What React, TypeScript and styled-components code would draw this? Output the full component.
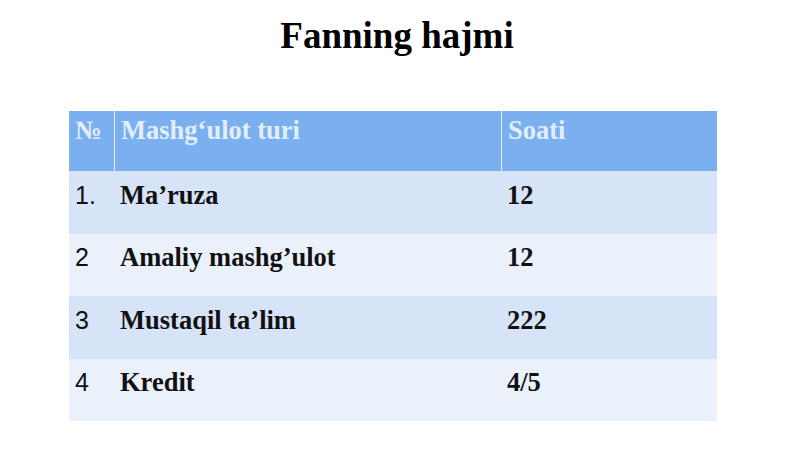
import React from 'react';
import styled, { createGlobalStyle } from 'styled-components';

const GlobalStyle = createGlobalStyle`
  html, body {
    margin: 0;
    padding: 0;
    background: #ffffff;
  }
`;

const Slide = styled.div`
  width: 800px;
  height: 449px;
  background: #ffffff;
  display: flex;
  flex-direction: column;
  align-items: center;
`;

const Title = styled.h1`
  margin: 14px 0 0 0;
  font-family: 'Liberation Serif', 'Times New Roman', serif;
  font-weight: bold;
  font-size: 37px;
  line-height: 44px;
  color: #000000;
  transform: translateX(-3px);
`;

const Table = styled.div`
  align-self: flex-start;
  margin-top: 53px;
  margin-left: 69px;
  width: 648px;
  display: grid;
  grid-template-columns: 45px 387px 216px;
`;

const Cell = styled.div<{ $bg: string; $divider?: boolean; $header?: boolean; $sans?: boolean }>`
  height: ${({ $header }) => ($header ? '60px' : '62.5px')};
  box-sizing: border-box;
  padding: ${({ $header }) => ($header ? '4px' : '8.5px')} 6px 0 6px;
  background: ${({ $bg }) => $bg};
  border-left: ${({ $divider }) => ($divider ? '1px solid #e4effc' : 'none')};
  font-family: ${({ $sans }) =>
    $sans ? "'Liberation Sans', Arial, sans-serif" : "'Liberation Serif', 'Times New Roman', serif"};
  font-weight: ${({ $sans }) => ($sans ? 'normal' : 'bold')};
  font-size: ${({ $sans }) => ($sans ? '25px' : '26.5px')};
  line-height: 30px;
  color: ${({ $header }) => ($header ? '#e3eefc' : '#111111')};
  white-space: nowrap;
`;

const rows = [
  { n: '1.', name: 'Ma’ruza', hours: '12' },
  { n: '2', name: 'Amaliy mashg’ulot', hours: '12' },
  { n: '3', name: 'Mustaqil ta’lim', hours: '222' },
  { n: '4', name: 'Kredit', hours: '4/5' },
];

const headerBg = '#7aaff0';
const oddBg = '#d7e3f6';
const evenBg = '#ebf1fb';

export default function App() {
  return (
    <>
      <GlobalStyle />
      <Slide>
        <Title>Fanning hajmi</Title>
        <Table>
          <Cell $bg={headerBg} $header>№</Cell>
          <Cell $bg={headerBg} $header $divider>Mashg‘ulot turi</Cell>
          <Cell $bg={headerBg} $header $divider>Soati</Cell>
          {rows.map((r, i) => {
            const bg = i % 2 === 0 ? oddBg : evenBg;
            return (
              <React.Fragment key={r.n}>
                <Cell $bg={bg} $sans>{r.n}</Cell>
                <Cell $bg={bg}>{r.name}</Cell>
                <Cell $bg={bg}>{r.hours}</Cell>
              </React.Fragment>
            );
          })}
        </Table>
      </Slide>
    </>
  );
}
